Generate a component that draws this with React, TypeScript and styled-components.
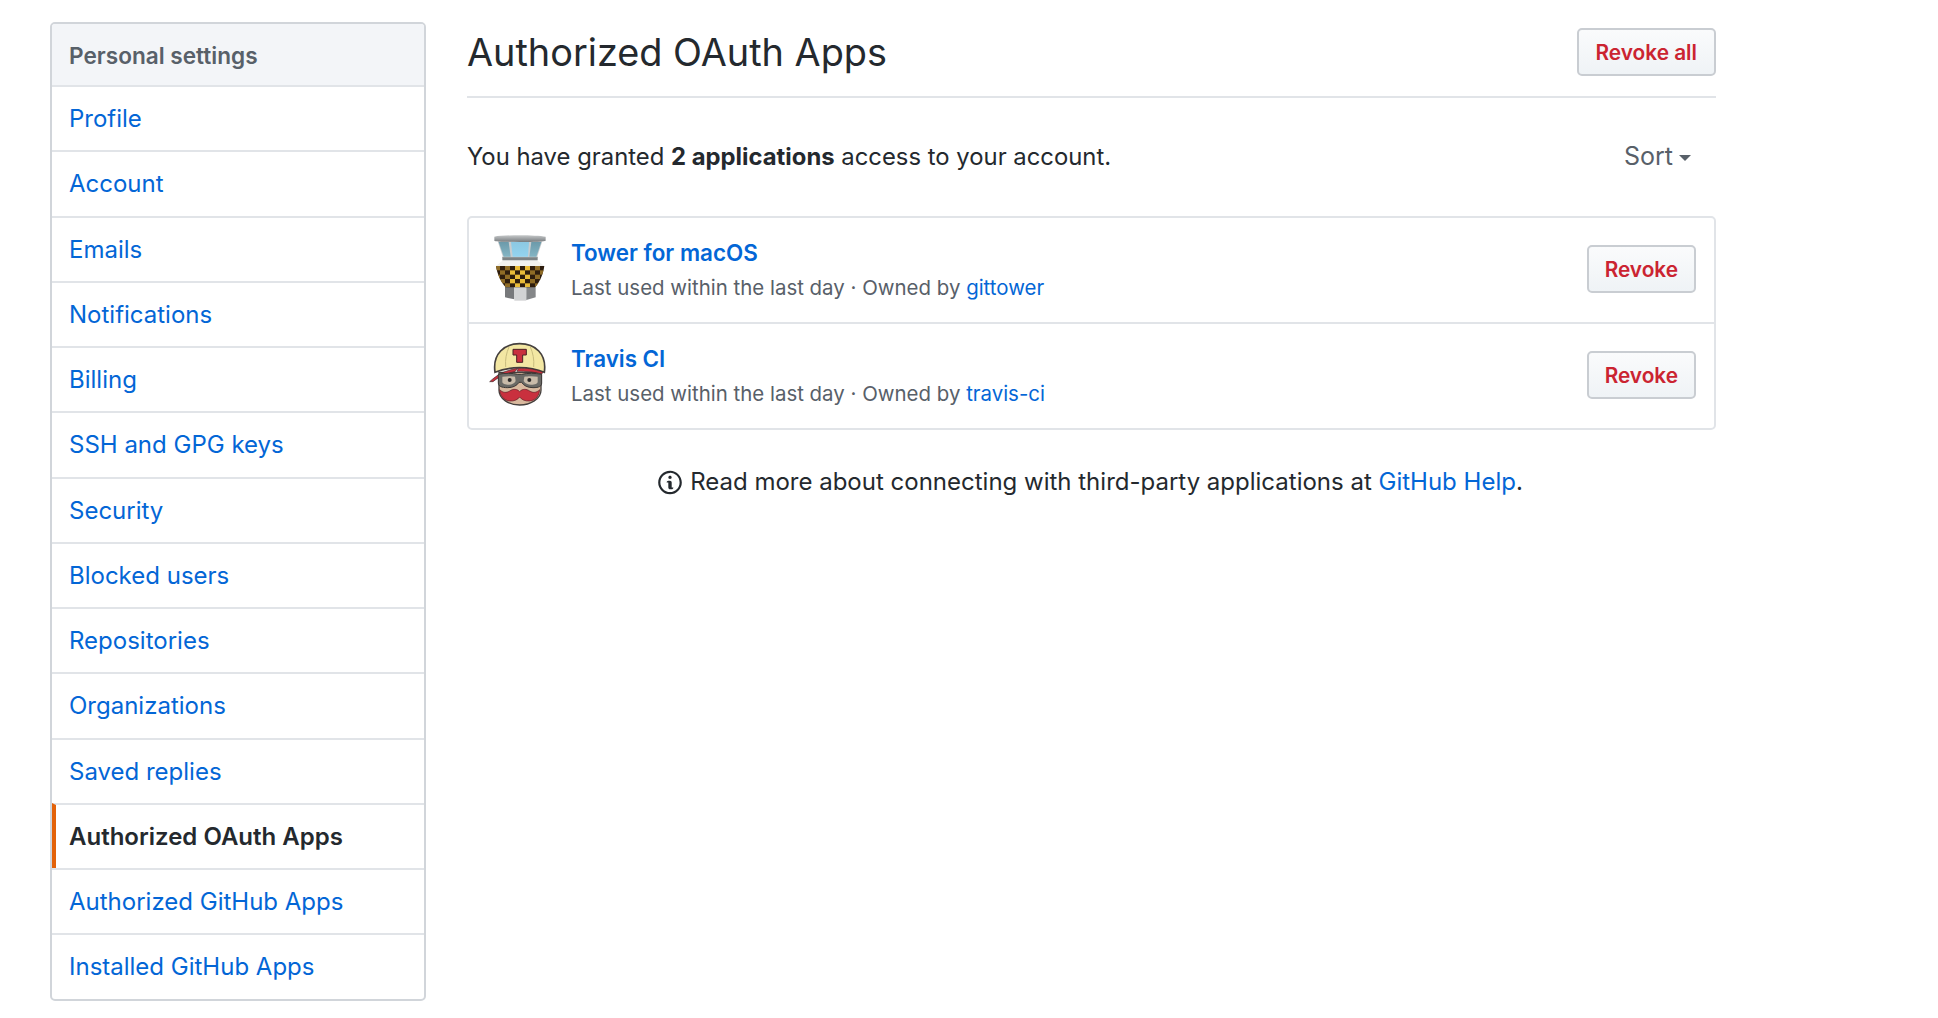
import React from 'react';
import styled, { createGlobalStyle } from 'styled-components';

const GlobalStyle = createGlobalStyle`
  html, body {
    margin: 0;
    padding: 0;
    background: #fff;
  }
  body {
    font-family: Inter, Roboto, "Liberation Sans", sans-serif;
    color: #24292e;
  }
`;

const Layout = styled.div`
  display: flex;
  align-items: flex-start;
  gap: 41px;
  width: 1666px;
  padding: 22px 0 0 50px;
`;

const Menu = styled.nav`
  flex-shrink: 0;
  box-sizing: border-box;
  width: 376px;
  border: 2px solid #d1d5da;
  border-radius: 5px;
  overflow: hidden;
`;

const MenuHeading = styled.div`
  box-sizing: border-box;
  height: 61px;
  padding: 1px 0 0 17px;
  display: flex;
  align-items: center;
  font-size: 22.6px;
  font-weight: 600;
  color: #586069;
  background: #f3f5f8;
`;

const MenuItem = styled.a<{ $selected?: boolean }>`
  box-sizing: border-box;
  height: 65.25px;
  padding-left: ${(p) => (p.$selected ? '13px' : '17px')};
  display: flex;
  align-items: center;
  font-size: 24px;
  font-weight: ${(p) => (p.$selected ? 600 : 400)};
  color: ${(p) => (p.$selected ? '#24292e' : '#0366d6')};
  border-top: 2px solid #e1e4e8;
  border-left: ${(p) => (p.$selected ? '4px solid #e36209' : 'none')};
`;

const Main = styled.main`
  flex: 1;
  min-width: 0;
`;

const PageHead = styled.header`
  box-sizing: border-box;
  display: flex;
  align-items: flex-start;
  justify-content: space-between;
  height: 76px;
  padding-top: 6px;
  border-bottom: 2px solid #e1e4e8;
`;

const PageTitle = styled.h1`
  margin: 0;
  font-size: 37.85px;
  font-weight: 400;
  line-height: 48px;
  color: #24292e;
`;

const Button = styled.button`
  box-sizing: border-box;
  height: 48px;
  padding: 0 16px;
  font-family: inherit;
  font-size: 20.8px;
  font-weight: 600;
  color: #cb2431;
  background: linear-gradient(#fafbfc, #eff3f6);
  border: 2px solid #c9cdd2;
  border-radius: 5px;
`;

const RevokeAllButton = styled(Button)`
  padding: 0 17px;
`;

const RowButton = styled(Button)`
  margin-bottom: 2px;
`;

const Summary = styled.div`
  box-sizing: border-box;
  display: flex;
  align-items: center;
  justify-content: space-between;
  height: 118px;
  padding-bottom: 2px;
  font-size: 23.85px;
`;

const Sort = styled.span`
  display: flex;
  align-items: center;
  gap: 6px;
  margin-right: 25px;
  font-size: 25px;
  color: #586069;
`;

const Caret = styled.i`
  margin-top: 4px;
  border: 6px solid transparent;
  border-top-color: #586069;
  border-bottom: 0;
`;

const AppBox = styled.div`
  border: 2px solid #e1e4e8;
  border-radius: 5px;
`;

const AppRow = styled.div`
  display: flex;
  align-items: center;
  height: 104px;
  padding: 0 18px 0 20px;
  & + & {
    border-top: 2px solid #e1e4e8;
  }
`;

const Avatar = styled.svg`
  flex-shrink: 0;
  width: 60px;
  height: 72px;
  margin-right: 22px;
`;

const AppInfo = styled.div`
  flex: 1;
`;

const AppName = styled.a`
  display: block;
  margin-bottom: 1px;
  font-size: 22.4px;
  font-weight: 600;
  line-height: 34px;
  color: #0366d6;
`;

const AppMeta = styled.div`
  font-size: 20.45px;
  line-height: 34px;
  color: #586069;
`;

const Link = styled.a`
  color: #0366d6;
`;

const Help = styled.p`
  display: flex;
  align-items: center;
  justify-content: center;
  gap: 8px;
  margin: 34px 0 0;
  padding-right: 2px;
  font-size: 24px;
  line-height: 36px;
`;

const menuItems = [
  'Profile',
  'Account',
  'Emails',
  'Notifications',
  'Billing',
  'SSH and GPG keys',
  'Security',
  'Blocked users',
  'Repositories',
  'Organizations',
  'Saved replies',
  'Authorized OAuth Apps',
  'Authorized GitHub Apps',
  'Installed GitHub Apps',
];

// checker squares of the tower balcony, darker towards the edges
const checkerCells: { x: number; y: number; fill: string }[] = [];
for (let row = 0; row < 5; row++) {
  for (let col = 0; col < 10; col++) {
    if ((row + col) % 2 === 0) {
      const x = 30 + col * 15;
      const edge = Math.abs(x + 7 - 105);
      checkerCells.push({ x, y: 116 + row * 13, fill: edge > 32 ? '#8f6c26' : '#e9bb38' });
    }
  }
}

function TowerLogo() {
  return (
    <Avatar viewBox="12 20 180 216">
      <defs>
        <linearGradient id="towerCap" x1="0" x2="0" y1="0" y2="1">
          <stop offset="0" stopColor="#c6c9ca" />
          <stop offset="1" stopColor="#787c7f" />
        </linearGradient>
        <linearGradient id="towerGlass" x1="0" x2="0" y1="0" y2="1">
          <stop offset="0" stopColor="#8cc8e2" />
          <stop offset="1" stopColor="#93d4ef" />
        </linearGradient>
        <linearGradient id="towerSide" x1="0" x2="0" y1="0" y2="1">
          <stop offset="0" stopColor="#6c9aaa" />
          <stop offset="1" stopColor="#84b5c4" />
        </linearGradient>
        <clipPath id="towerBalcony">
          <path d="M33 116h145c-4 26-14 48-28 64H62c-14-16-25-38-29-64z" />
        </clipPath>
      </defs>
      <path d="M60 176h28v40l-28-6z" fill="#77797b" />
      <path d="M88 176h36v44H88z" fill="#d2d3d4" />
      <path d="M124 176h28v34l-28 8z" fill="#858789" />
      <path d="M33 116h145c-4 26-14 48-28 64H62c-14-16-25-38-29-64z" fill="#2e1d0e" />
      <g clipPath="url(#towerBalcony)">
        {checkerCells.map((c) => (
          <rect key={`${c.x}-${c.y}`} x={c.x} y={c.y} width="15" height="13" fill={c.fill} />
        ))}
      </g>
      <path d="M55 98h100l23 18H33z" fill="#f1f1f0" />
      <path d="M52 88h106v11H52z" fill="#7e8486" />
      <path d="M38 42h134l-16 48H54z" fill="#c9cdcf" />
      <path d="M41 44h30l6 44H56z" fill="url(#towerSide)" />
      <path d="M78 44h54l-3 44H83z" fill="url(#towerGlass)" />
      <path d="M139 44h30l-15 44h-21z" fill="url(#towerSide)" />
      <path d="M28 28c30-6 124-6 154 0v12c-2 5-152 5-154 0z" fill="url(#towerCap)" />
    </Avatar>
  );
}

function TravisLogo() {
  return (
    <Avatar viewBox="12 9 180 216">
      <path d="M42 106v54c0 26 30 44 62 44s64-18 64-44v-54z" fill="#d9b99e" stroke="#45403e" strokeWidth="4" />
      <path d="M30 106C22 50 58 20 104 20s82 30 74 86c-24-10-48-14-74-14s-50 4-74 14z" fill="#f3e7a3" stroke="#45403e" strokeWidth="5" />
      <path d="M72 30c-8 18-12 38-10 60M136 30c8 18 12 38 10 60" fill="none" stroke="#c9bd7f" strokeWidth="3" />
      <path d="M84 37h40v17h-11v22H95V54H84z" fill="#c9303e" stroke="#4a2024" strokeWidth="3" />
      <path d="M14 134c24-22 46-34 84-40l-8 10c-26 4-46 14-66 30z" fill="#c9303e" stroke="#3b2b2b" strokeWidth="2" />
      <path d="M100 94c24-2 50 2 74 12l-4 5c-22-6-46-9-74-8z" fill="#c9303e" stroke="#3b2b2b" strokeWidth="2" />
      <path d="M40 112c18-4 42-4 58 0h12c16-4 42-4 60 0v26c0 10-8 14-26 14-16 0-28-6-34-16h-8c-6 10-18 16-34 16-18 0-28-4-28-14z" fill="#6b6a66" stroke="#3b3836" strokeWidth="3" />
      <path d="M52 119c12-2 30-2 38 0l2 13c-4 8-12 11-20 11-12 0-20-3-20-9z" fill="#c9bba9" />
      <path d="M118 119c10-2 28-2 40 0v15c0 6-8 9-20 9-8 0-18-3-22-11z" fill="#c9bba9" />
      <circle cx="74" cy="129" r="6" fill="#2d2a2a" />
      <circle cx="133" cy="129" r="6" fill="#2d2a2a" />
      <path d="M104 164c8-9 20-9 30-2 10 6 20 6 30-4-1 18-12 32-30 34-14 1-24-4-30-12-6 8-16 13-30 12-18-2-29-16-30-34 10 10 20 10 30 4 10-7 22-7 30 2z" fill="#c9303e" stroke="#5b2026" strokeWidth="2" />
    </Avatar>
  );
}

function InfoIcon() {
  return (
    <svg width="24" height="27" viewBox="0 0 14 16" fill="#24292e" aria-hidden="true">
      <path
        fillRule="evenodd"
        d="M6.3 5.69a.942.942 0 0 1-.28-.7c0-.28.09-.52.28-.7.19-.18.42-.28.7-.28.28 0 .52.09.7.28.18.19.28.42.28.7 0 .28-.09.52-.28.7a1 1 0 0 1-.7.3c-.28 0-.52-.11-.7-.3zM8 7.99c-.02-.25-.11-.48-.31-.69-.2-.19-.42-.3-.69-.31H6c-.27.02-.48.13-.69.31-.2.2-.3.44-.31.69h1v3c.02.27.11.5.31.69.2.2.42.31.69.31h1c.27 0 .48-.11.69-.31.2-.19.3-.42.31-.69H8V7.98v.01zM7 2.3c-3.14 0-5.7 2.54-5.7 5.68 0 3.14 2.56 5.7 5.7 5.7s5.7-2.55 5.7-5.7c0-3.15-2.56-5.69-5.7-5.69v.01zM7 .98c3.86 0 7 3.14 7 7s-3.14 7-7 7-7-3.12-7-7 3.14-7 7-7z"
      />
    </svg>
  );
}

export default function App() {
  return (
    <>
      <GlobalStyle />
      <Layout>
        <Menu>
          <MenuHeading>Personal settings</MenuHeading>
          {menuItems.map((item) => (
            <MenuItem key={item} $selected={item === 'Authorized OAuth Apps'}>{item}</MenuItem>
          ))}
        </Menu>
        <Main>
          <PageHead>
            <PageTitle>Authorized OAuth Apps</PageTitle>
            <RevokeAllButton>Revoke all</RevokeAllButton>
          </PageHead>
          <Summary>
            <span>You have granted <strong>2 applications</strong> access to your account.</span>
            <Sort>Sort <Caret /></Sort>
          </Summary>
          <AppBox>
            <AppRow>
              <TowerLogo />
              <AppInfo>
                <AppName>Tower for macOS</AppName>
                <AppMeta>Last used within the last day · Owned by <Link>gittower</Link></AppMeta>
              </AppInfo>
              <RowButton>Revoke</RowButton>
            </AppRow>
            <AppRow>
              <TravisLogo />
              <AppInfo>
                <AppName>Travis CI</AppName>
                <AppMeta>Last used within the last day · Owned by <Link>travis-ci</Link></AppMeta>
              </AppInfo>
              <RowButton>Revoke</RowButton>
            </AppRow>
          </AppBox>
          <Help>
            <InfoIcon />
            <span>Read more about connecting with third-party applications at <Link>GitHub Help</Link>.</span>
          </Help>
        </Main>
      </Layout>
    </>
  );
}
